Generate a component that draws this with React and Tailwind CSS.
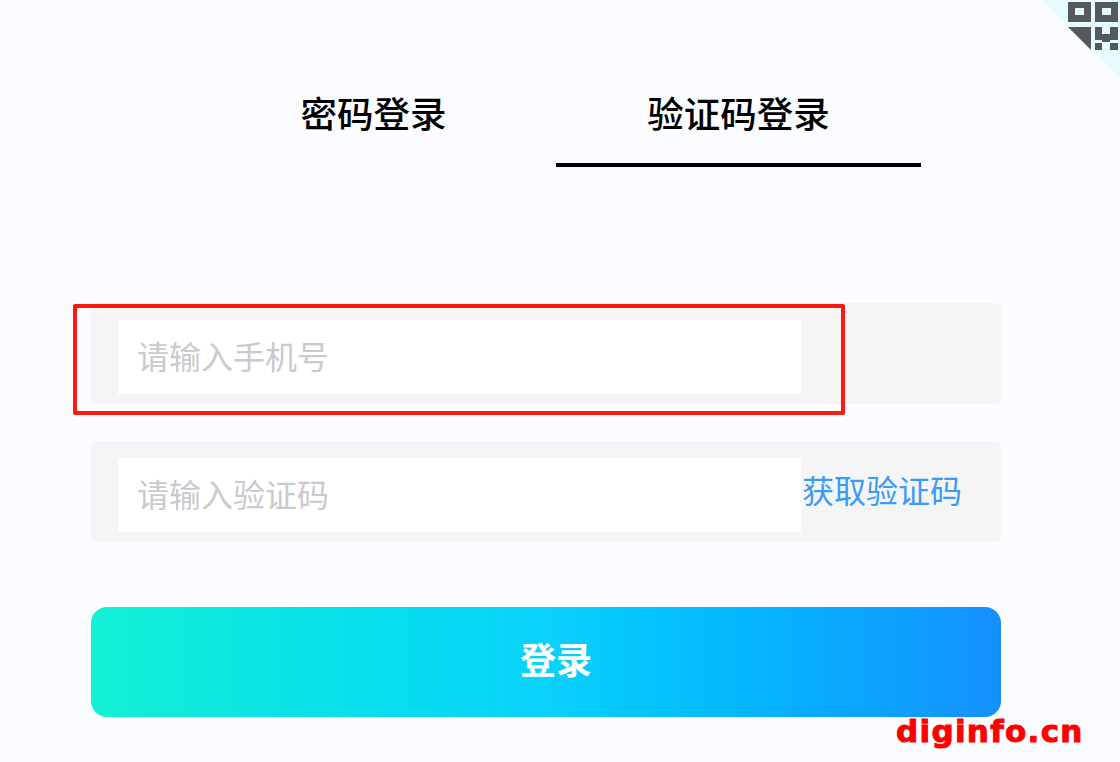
const cjk = "font-['Noto_Sans_CJK_SC','Liberation_Sans',sans-serif]"

function CornerQr() {
  return (
    <svg className="absolute top-0 right-0" width="78" height="78" viewBox="1042 0 78 78">
      <path d="M1042 0H1120V78Z" fill="#e6fbff" />
      <path fillRule="evenodd" fill="#55595c" d="M1068 2h23v20h-23zM1075 8v7h9V8z" />
      <path fillRule="evenodd" fill="#55595c" d="M1095 2h23v20h-23zM1102 8v7h9V8z" />
      <path fill="#55595c" d="M1068 27H1091V50Z" />
      <path fill="#55595c" d="M1095 27h7v13h-7zM1110 27h8v13h-8zM1102 34h8v8h-8zM1095 43h7v7h-7zM1110 43h8v7h-8z" />
    </svg>
  )
}

function Field({ placeholder, action }) {
  return (
    <div className="flex h-[101px] items-start rounded-md bg-[#f5f5f5] pt-[17px] pl-[27px]">
      <input
        readOnly
        placeholder={placeholder}
        className="h-[74px] w-[683px] bg-white pr-5 pb-1 pl-[19px] text-[32px] outline-none placeholder:text-[#c9c9cf]"
      />
      {action && <span className="mt-3 ml-px text-[32px] leading-[38px] whitespace-nowrap text-[#3a9bf8]">{action}</span>}
    </div>
  )
}

export default function App() {
  return (
    <div className={`relative h-[762px] overflow-hidden bg-[#fbfcff] ${cjk}`}>
      <CornerQr />

      <div className="ml-[191px] flex w-[730px] pt-[64px]">
        <div className="flex h-[103px] w-[365px] justify-center pt-[24px] text-[36.5px] leading-[50px] font-medium text-black">
          密码登录
        </div>
        <div className="flex h-[103px] w-[365px] justify-center border-b-4 border-black pt-[24px] text-[36.5px] leading-[50px] font-medium text-black">
          验证码登录
        </div>
      </div>

      <div className="mt-[136px] ml-[91px] flex w-[910px] flex-col">
        <Field placeholder="请输入手机号" />
        <div className="mt-[37px]">
          <Field placeholder="请输入验证码" action="获取验证码" />
        </div>
        <button
          type="button"
          className="mt-[65px] h-[110px] rounded-2xl bg-gradient-to-r from-[#14f0d4] via-[#0ad2fb] to-[#1590ff] pb-2 pl-5 text-[36px] font-bold text-white"
        >
          登录
        </button>
      </div>

      {/* annotation box drawn over the phone field */}
      <div className="absolute top-[304px] left-[73px] h-[111px] w-[772px] rounded-xs border-4 border-[#fb1a10]" />

      <div className="absolute top-[711px] left-[896px] font-['DejaVu_Sans',sans-serif] text-[31px] leading-[40px] font-bold tracking-[1.3px] text-[#ff0000] [-webkit-text-stroke:1px_#ff0000]">
        diginfo.cn
      </div>
    </div>
  )
}
